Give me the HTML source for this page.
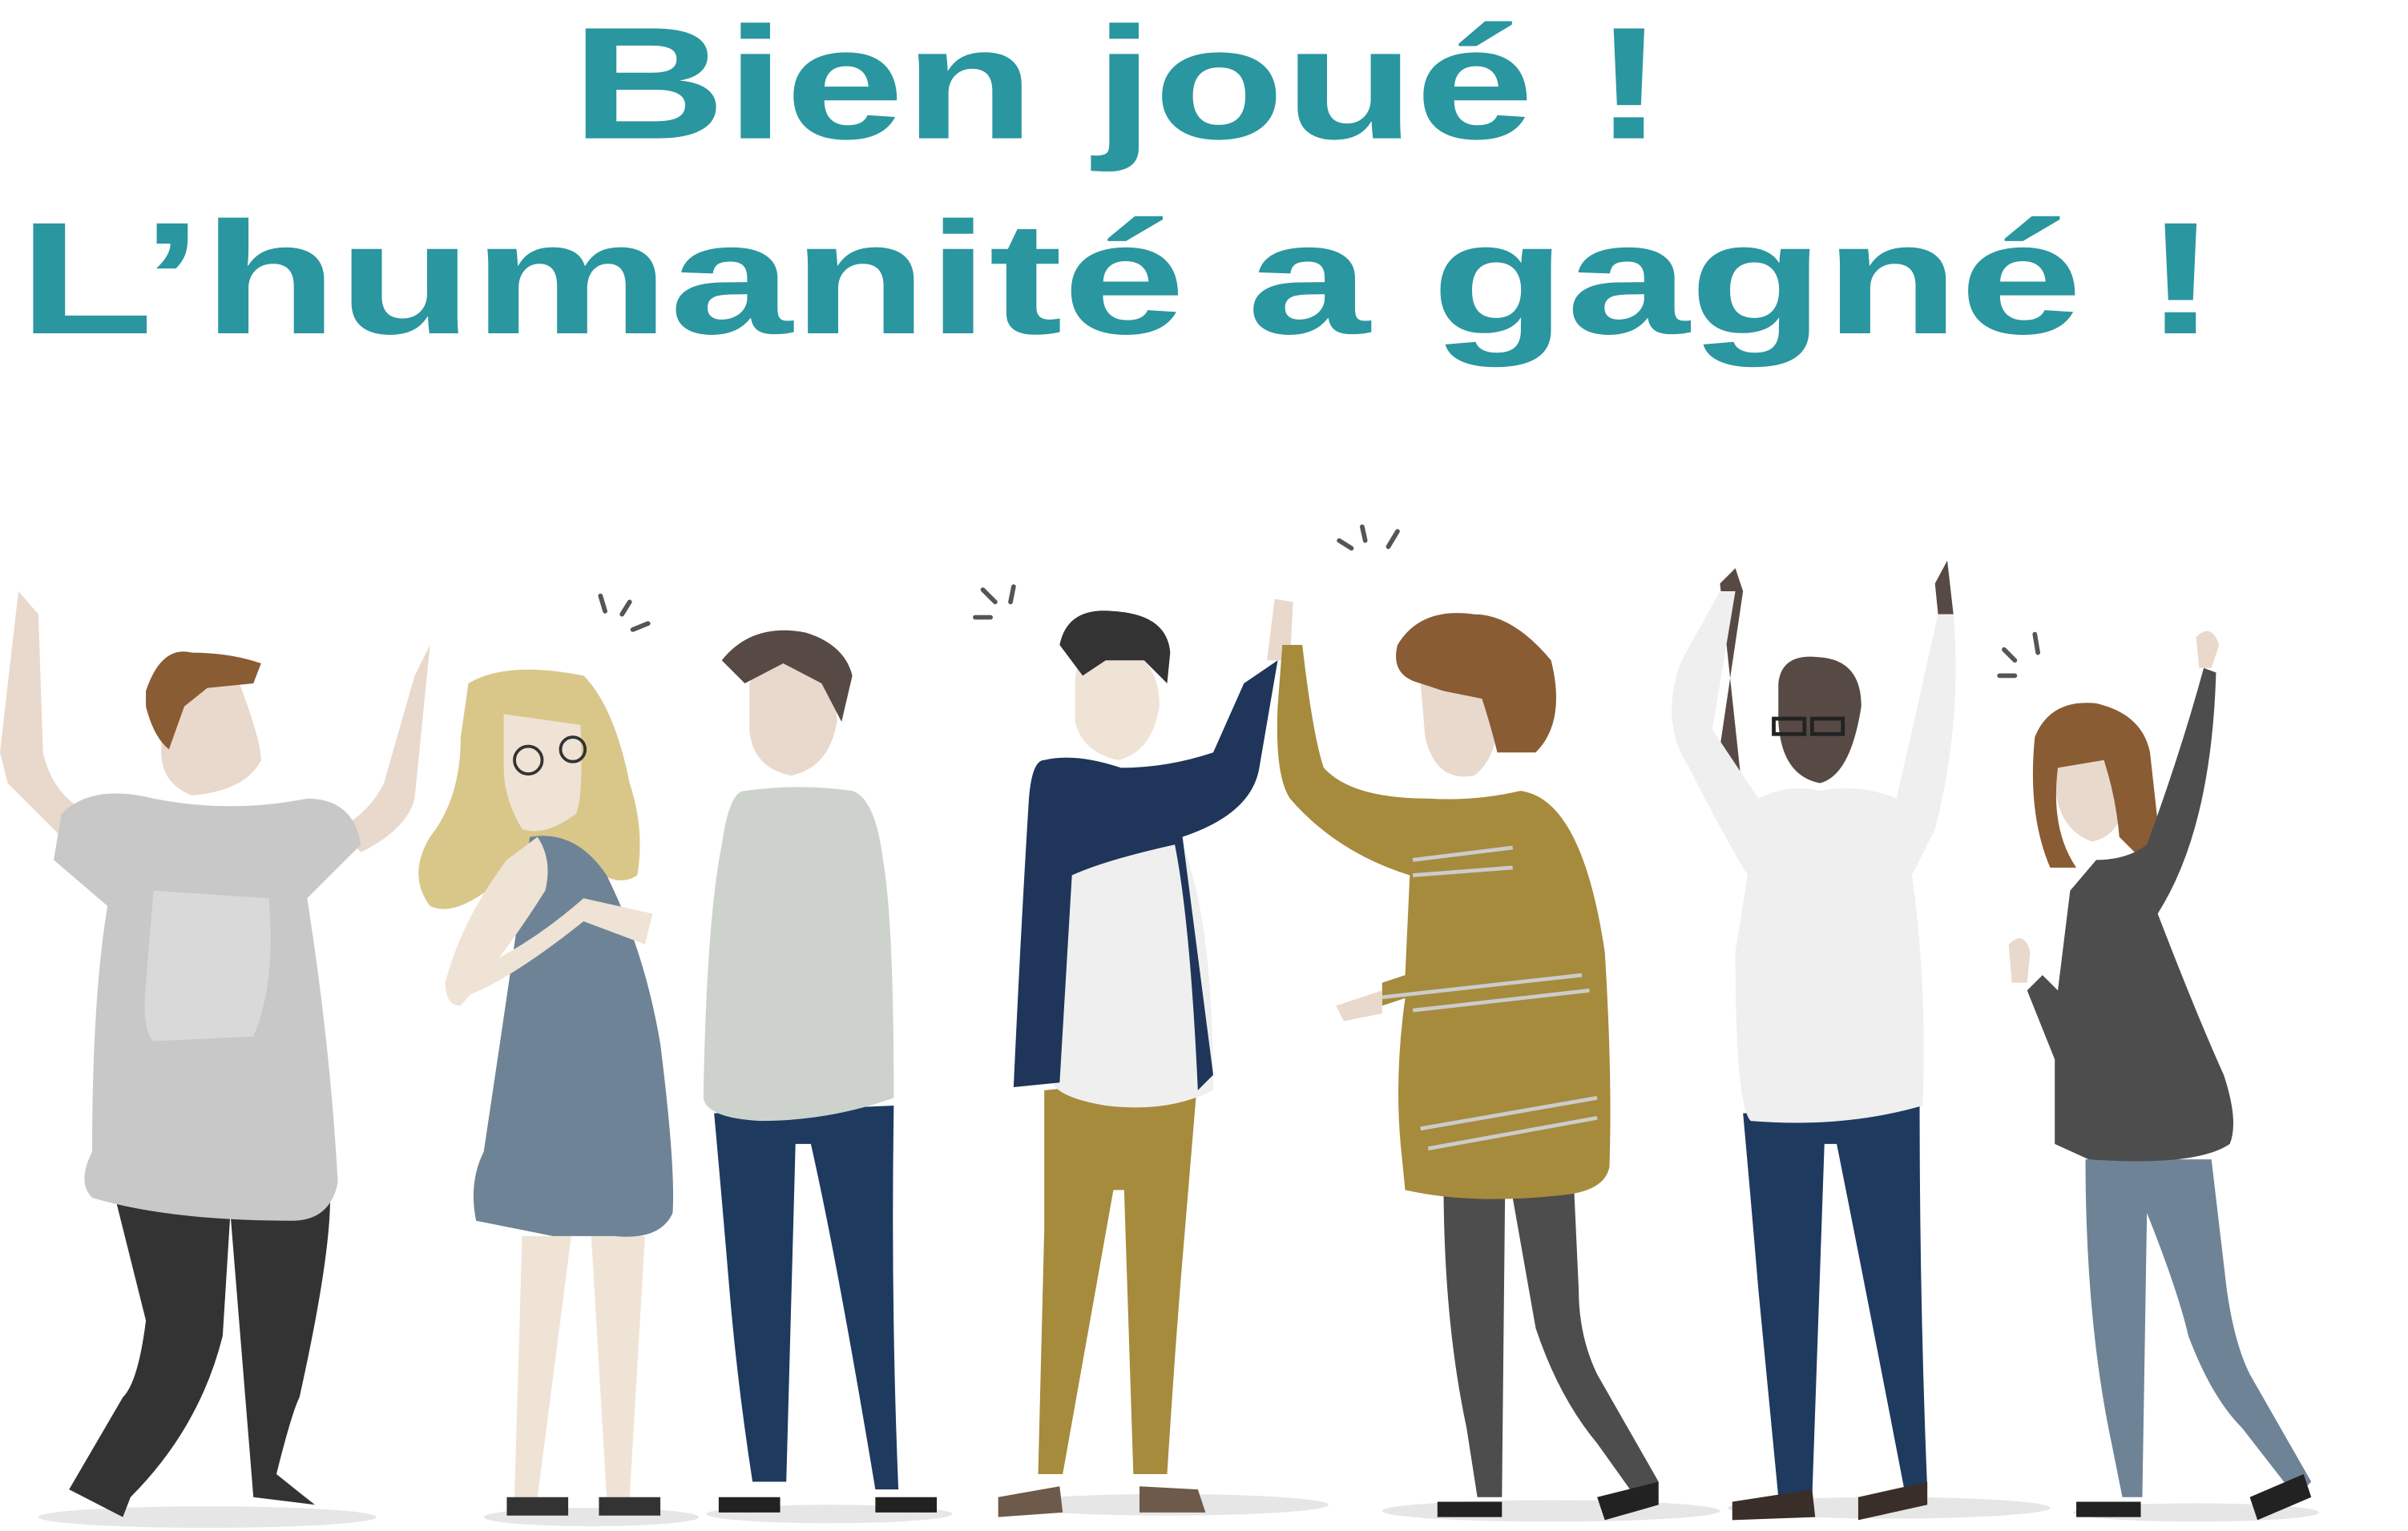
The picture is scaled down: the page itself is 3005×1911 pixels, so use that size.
<!DOCTYPE html>
<html><head><meta charset="utf-8"><style>
html,body{margin:0;padding:0;background:#fff;width:3005px;height:1911px;overflow:hidden}
svg{display:block}
</style></head><body>
<svg width="3005" height="1911" viewBox="0 0 1568 997" xmlns="http://www.w3.org/2000/svg">
<g font-family="Liberation Sans, sans-serif" font-weight="bold" fill="#2a96a0">
<text x="372" y="90" font-size="104" textLength="712" lengthAdjust="spacingAndGlyphs">Bien joué !</text>
<text x="12" y="217" font-size="104" textLength="1432" lengthAdjust="spacingAndGlyphs">L’humanité a gagné !</text>
</g>
<!-- shadows -->
<g fill="#e6e6e6">
<ellipse cx="135" cy="988" rx="110" ry="7"/>
<ellipse cx="385" cy="988" rx="70" ry="6"/>
<ellipse cx="540" cy="986" rx="80" ry="6"/>
<ellipse cx="760" cy="980" rx="105" ry="7"/>
<ellipse cx="1010" cy="984" rx="110" ry="7"/>
<ellipse cx="1230" cy="982" rx="105" ry="7"/>
<ellipse cx="1430" cy="985" rx="80" ry="6"/>
</g>
<!-- Figure 1 -->
<g>
<path d="M12 385 L25 400 L28 490 Q35 520 60 530 L40 545 L5 510 L0 490 Z" fill="#e8d9cc"/>
<path d="M280 420 L270 440 L250 510 Q240 530 220 540 L235 555 Q265 540 270 520 Z" fill="#e8d9cc"/>
<path d="M75 780 L95 860 Q90 900 80 910 L45 970 L80 988 L85 975 Q130 930 145 870 L150 790 Z" fill="#333"/>
<path d="M150 790 L165 975 L205 980 L180 960 Q190 920 195 910 Q215 820 215 780 Z" fill="#333"/>
<path d="M40 530 Q60 510 100 520 Q150 530 200 520 Q230 520 235 550 L200 585 Q215 680 220 770 Q215 795 190 795 Q110 795 60 780 Q50 770 60 750 Q60 650 70 590 L35 560 Z" fill="#c8c8c8"/>
<path d="M100 580 L175 585 Q180 640 165 675 L100 678 Q92 670 95 640 Z" fill="#d9d9d9"/>
<path d="M105 450 Q110 420 150 430 Q170 480 170 495 Q160 515 125 518 Q105 510 105 490 Z" fill="#e8d9cc"/>
<path d="M95 450 Q105 420 125 425 Q150 425 170 432 L165 445 L135 448 L120 460 L110 488 Q100 480 95 460 Z" fill="#8a5c34"/>
</g>
<!-- Figure 2 -->
<g>
<path d="M340 805 L335 975 L350 975 L372 805 Z M385 805 L395 975 L410 975 L420 805 Z" fill="#efe3d5"/>
<path d="M330 975 h40 v12 h-40 Z M390 975 h40 v12 h-40 Z" fill="#333"/>
<path d="M305 445 Q330 430 380 440 Q400 460 410 510 Q420 540 415 570 Q400 580 380 560 L340 560 Q300 600 280 590 Q265 570 280 545 Q300 520 300 480 Z" fill="#d9c78a"/>
<path d="M328 465 L378 472 Q380 520 375 530 Q355 545 340 540 Q328 520 328 500 Z" fill="#efe3d5"/>
<circle cx="344" cy="495" r="9" fill="none" stroke="#333" stroke-width="2"/>
<circle cx="373" cy="488" r="8" fill="none" stroke="#333" stroke-width="2"/>
<path d="M345 545 Q375 540 395 570 Q420 620 430 680 Q440 760 438 790 Q430 808 400 805 L360 805 Q335 800 310 795 Q305 770 315 750 Q330 650 340 580 Z" fill="#6e8396"/>
<path d="M350 545 Q360 560 355 580 Q330 620 300 655 Q290 655 290 640 Q300 600 330 560 Z" fill="#efe3d5"/>
<path d="M300 650 Q330 640 380 600 L420 615 L425 595 L380 585 Q340 620 300 635 Z" fill="#efe3d5"/>
</g>
<!-- Figure 3 -->
<g>
<path d="M465 725 Q470 780 475 840 Q480 900 490 965 L512 965 L518 745 L528 745 Q545 820 570 970 L585 970 Q580 850 582 720 Z" fill="#1f3a5f"/>
<path d="M468 975 h40 v10 h-40 Z M570 975 h40 v10 h-40 Z" fill="#222"/>
<path d="M488 445 Q495 430 520 430 Q545 445 545 470 Q540 500 515 505 Q490 500 488 475 Z" fill="#e8d9cc"/>
<path d="M470 430 Q490 405 525 412 Q550 420 555 440 L548 470 L535 445 L510 432 L485 445 Z" fill="#574a45"/>
<path d="M485 515 Q520 510 555 515 Q570 520 575 560 Q582 600 582 715 Q540 730 495 730 Q460 728 458 715 Q460 600 470 550 Q475 515 485 515 Z" fill="#cdd3cc"/>
</g>
<!-- Figure 4 -->
<g>
<path d="M680 710 L680 800 L676 960 L692 960 L725 775 L732 775 L738 960 L760 960 Q765 880 770 820 L780 700 Z" fill="#a68b3d"/>
<path d="M650 975 L690 968 L692 985 L650 988 Z M742 968 L780 970 L785 985 L742 985 Z" fill="#6e5a4a"/>
<path d="M700 445 Q700 420 730 420 Q755 430 755 460 Q750 490 728 495 Q705 490 700 470 Z" fill="#efe3d5"/>
<path d="M690 420 Q695 395 725 398 Q760 400 762 425 L760 445 L745 430 L720 430 L705 440 Z" fill="#333"/>
<path d="M695 565 Q740 545 770 550 Q790 600 790 710 Q760 725 720 720 Q690 715 685 705 Q690 620 695 565 Z" fill="#efefef"/>
<path d="M680 495 Q700 490 730 500 Q760 500 790 490 L810 445 L832 430 L820 500 Q815 530 770 545 L790 700 L780 710 Q775 600 765 550 Q720 560 698 570 L690 705 L660 708 Q665 600 670 520 Q672 495 680 495 Z" fill="#1f355a"/>
<path d="M830 390 L842 392 L840 430 L825 430 Z" fill="#e8d9cc"/>
</g>
<!-- Figure 5 -->
<g>
<path d="M940 770 Q940 860 955 930 L962 975 L978 975 L980 780 Z M985 780 L1000 865 Q1015 910 1040 940 L1065 975 L1080 965 L1040 895 Q1028 870 1028 840 L1025 775 Z" fill="#4d4d4d"/>
<path d="M936 978 h42 v10 h-42 Z M1040 975 L1080 965 L1080 980 L1045 990 Z" fill="#222"/>
<path d="M925 445 Q950 420 975 445 Q980 490 960 505 Q935 510 928 480 Z" fill="#e8d9cc"/>
<path d="M910 420 Q925 395 960 400 Q985 400 1010 430 Q1020 470 1000 490 L975 490 Q970 470 965 455 L940 450 L925 445 Q905 440 910 420 Z" fill="#8a5c34"/>
<path d="M835 420 L848 420 Q855 480 862 500 Q880 520 930 520 Q960 522 990 515 Q1030 520 1045 620 Q1050 700 1048 760 Q1045 775 1020 778 Q960 785 915 775 L912 745 Q908 700 915 650 L900 655 L900 640 L915 635 L918 570 Q870 555 840 520 Q830 505 832 460 Z" fill="#a68b3d"/>
<path d="M920 560 L985 552 M920 570 L985 565 M920 658 L1035 645 M925 735 L1040 715 M930 748 L1040 728 M895 650 L1030 635" stroke="#ccc" stroke-width="2.5" fill="none"/>
<path d="M870 655 L900 645 L900 660 L875 665 Z" fill="#e8d9cc"/>
</g>
<!-- Figure 6 -->
<g>
<path d="M1135 725 Q1140 780 1145 840 L1158 975 L1180 975 L1188 745 L1196 745 Q1215 840 1240 970 L1255 970 Q1250 850 1250 720 Z" fill="#1f3a5f"/>
<path d="M1128 978 L1180 970 L1182 988 L1128 990 Z M1210 975 L1255 965 L1255 980 L1210 990 Z" fill="#3a2e28"/>
<path d="M1120 380 L1130 370 L1135 385 L1115 520 L1140 560 L1135 520 Z" fill="#574a45"/>
<path d="M1260 380 L1268 365 L1272 400 L1262 400 Z" fill="#574a45"/>
<path d="M1158 445 Q1160 425 1185 428 Q1212 430 1212 460 Q1205 505 1185 510 Q1160 505 1158 470 Z" fill="#574a45"/>
<path d="M1155 468 h20 v10 h-20 Z M1180 468 h20 v10 h-20 Z" fill="none" stroke="#222" stroke-width="2.5"/>
<path d="M1120 385 L1130 385 L1115 475 L1145 520 Q1165 510 1185 515 Q1210 510 1235 520 L1262 400 L1272 400 Q1278 470 1260 540 L1245 570 Q1255 640 1252 720 Q1200 735 1140 730 Q1130 720 1130 620 L1138 570 Q1120 540 1100 500 Q1080 470 1095 430 Z" fill="#efefef"/>
</g>
<!-- Figure 7 -->
<g>
<path d="M1358 755 Q1358 860 1375 940 L1382 975 L1395 975 L1398 790 Q1418 840 1425 870 Q1440 910 1460 930 L1495 975 L1505 965 L1465 895 Q1455 875 1450 840 L1440 755 Z" fill="#6e8396"/>
<path d="M1352 978 h42 v10 h-42 Z M1465 975 L1500 960 L1505 975 L1470 990 Z" fill="#222"/>
<path d="M1430 415 Q1440 405 1445 420 L1440 435 L1432 435 Z M1308 615 Q1318 605 1322 620 L1320 640 L1310 640 Z" fill="#e8d9cc"/>
<path d="M1338 485 Q1345 470 1365 475 Q1385 485 1385 520 Q1380 545 1362 548 Q1340 540 1338 510 Z" fill="#e8d9cc"/>
<path d="M1325 480 Q1335 455 1365 458 Q1395 465 1400 490 L1405 535 L1395 560 L1380 545 Q1378 520 1370 495 L1340 500 Q1335 540 1352 565 L1335 565 Q1320 530 1325 480 Z" fill="#8a5c34"/>
<path d="M1435 435 L1443 438 Q1440 540 1405 595 Q1430 660 1448 700 Q1458 730 1452 745 Q1430 760 1360 755 L1338 745 L1338 690 L1320 645 L1330 635 L1340 645 L1348 580 L1365 560 Q1385 560 1398 550 Q1420 490 1435 435 Z" fill="#4d4d4d"/>
</g>
<!-- motion marks -->
<g stroke="#555" stroke-width="3" stroke-linecap="round">
<path d="M391 388 L394 398 M410 392 L405 400 M412 410 L422 406"/>
<path d="M640 384 L648 392 M635 402 L645 402 M660 382 L658 392"/>
<path d="M872 352 L880 357 M887 343 L889 352 M910 346 L904 356"/>
<path d="M1305 423 L1312 430 M1325 413 L1327 425 M1302 440 L1312 440"/>
</g>
</svg>
</body></html>
